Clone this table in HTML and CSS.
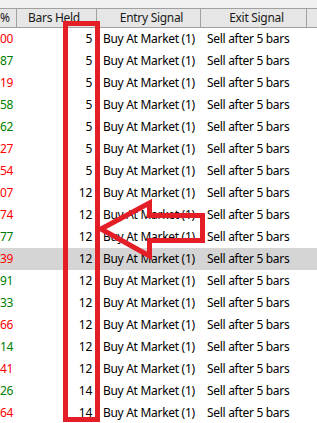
FILE: index.html
```html
<!DOCTYPE html>
<html>
<head>
<meta charset="utf-8">
<link rel="stylesheet" href="styles.css">
</head>
<body>
<div class="view">
  <div class="table">
    <div class="row head">
      <div class="cell c1">%</div>
      <div class="cell c2">Bars Held</div>
      <div class="cell c3">Entry Signal</div>
      <div class="cell c4">Exit Signal</div>
      <div class="cell c5"></div>
    </div>
    <div class="row"><div class="cell c1 neg">00</div><div class="cell c2">5</div><div class="cell c3">Buy At Market (1)</div><div class="cell c4">Sell after 5 bars</div><div class="cell c5"></div></div>
    <div class="row"><div class="cell c1 pos">87</div><div class="cell c2">5</div><div class="cell c3">Buy At Market (1)</div><div class="cell c4">Sell after 5 bars</div><div class="cell c5"></div></div>
    <div class="row"><div class="cell c1 neg">19</div><div class="cell c2">5</div><div class="cell c3">Buy At Market (1)</div><div class="cell c4">Sell after 5 bars</div><div class="cell c5"></div></div>
    <div class="row"><div class="cell c1 pos">58</div><div class="cell c2">5</div><div class="cell c3">Buy At Market (1)</div><div class="cell c4">Sell after 5 bars</div><div class="cell c5"></div></div>
    <div class="row"><div class="cell c1 pos">62</div><div class="cell c2">5</div><div class="cell c3">Buy At Market (1)</div><div class="cell c4">Sell after 5 bars</div><div class="cell c5"></div></div>
    <div class="row"><div class="cell c1 neg">27</div><div class="cell c2">5</div><div class="cell c3">Buy At Market (1)</div><div class="cell c4">Sell after 5 bars</div><div class="cell c5"></div></div>
    <div class="row"><div class="cell c1 neg">54</div><div class="cell c2">5</div><div class="cell c3">Buy At Market (1)</div><div class="cell c4">Sell after 5 bars</div><div class="cell c5"></div></div>
    <div class="row"><div class="cell c1 neg">07</div><div class="cell c2">12</div><div class="cell c3">Buy At Market (1)</div><div class="cell c4">Sell after 5 bars</div><div class="cell c5"></div></div>
    <div class="row"><div class="cell c1 neg">74</div><div class="cell c2">12</div><div class="cell c3">Buy At Market (1)</div><div class="cell c4">Sell after 5 bars</div><div class="cell c5"></div></div>
    <div class="row"><div class="cell c1 pos">77</div><div class="cell c2">12</div><div class="cell c3">Buy At Market (1)</div><div class="cell c4">Sell after 5 bars</div><div class="cell c5"></div></div>
    <div class="row selected"><div class="cell c1 neg">39</div><div class="cell c2">12</div><div class="cell c3">Buy At Market (1)</div><div class="cell c4">Sell after 5 bars</div><div class="cell c5"></div></div>
    <div class="row"><div class="cell c1 pos">91</div><div class="cell c2">12</div><div class="cell c3">Buy At Market (1)</div><div class="cell c4">Sell after 5 bars</div><div class="cell c5"></div></div>
    <div class="row"><div class="cell c1 pos">33</div><div class="cell c2">12</div><div class="cell c3">Buy At Market (1)</div><div class="cell c4">Sell after 5 bars</div><div class="cell c5"></div></div>
    <div class="row"><div class="cell c1 neg">66</div><div class="cell c2">12</div><div class="cell c3">Buy At Market (1)</div><div class="cell c4">Sell after 5 bars</div><div class="cell c5"></div></div>
    <div class="row"><div class="cell c1 pos">14</div><div class="cell c2">12</div><div class="cell c3">Buy At Market (1)</div><div class="cell c4">Sell after 5 bars</div><div class="cell c5"></div></div>
    <div class="row"><div class="cell c1 neg">41</div><div class="cell c2">12</div><div class="cell c3">Buy At Market (1)</div><div class="cell c4">Sell after 5 bars</div><div class="cell c5"></div></div>
    <div class="row"><div class="cell c1 pos">26</div><div class="cell c2">14</div><div class="cell c3">Buy At Market (1)</div><div class="cell c4">Sell after 5 bars</div><div class="cell c5"></div></div>
    <div class="row"><div class="cell c1 neg">64</div><div class="cell c2">14</div><div class="cell c3">Buy At Market (1)</div><div class="cell c4">Sell after 5 bars</div><div class="cell c5"></div></div>
  </div>
  <svg class="markup" width="317" height="423" viewBox="0 0 317 423">
    <rect x="65.5" y="23.5" width="32" height="396" fill="none" stroke="#e41e26" stroke-width="5"/>
    <polygon points="101,229 149.5,203 149.5,215.5 202.5,215.5 202.5,240.5 149.5,240.5 149.5,256" fill="none" stroke="#e41e26" stroke-width="5" stroke-linejoin="miter" stroke-miterlimit="10"/>
  </svg>
</div>
</body>
</html>
```

FILE: styles.css
```css
html, body {
  margin: 0;
  padding: 0;
}
body {
  background: #f0f0f0;
  font-family: "Noto Sans", "Open Sans", sans-serif;
  font-size: 12px;
  letter-spacing: -0.3px;
  color: #000;
  width: 317px;
  height: 423px;
  overflow: hidden;
}
.view {
  position: relative;
  width: 317px;
  height: 423px;
  overflow: hidden;
  padding-top: 8px;
  box-sizing: border-box;
}
.table {
  background: #fff;
}
.row {
  display: grid;
  grid-template-columns: 17px 80px 104px 106px 1fr;
  height: 22px;
  align-items: center;
}
.cell {
  box-sizing: border-box;
  white-space: nowrap;
  overflow: hidden;
  line-height: 22px;
  height: 22px;
}
.head {
  height: 20px;
  background: #e6e6e6;
  border-top: 1px solid #a0a0a0;
  border-bottom: 1px solid #a0a0a0;
  box-sizing: border-box;
}
.head .cell {
  height: 18px;
  line-height: 18px;
  text-align: center;
  border-right: 1px solid #a0a0a0;
  color: #1a1a1a;
}
.head .c1 {
  text-align: right;
  padding-right: 11px;
}
.head .c5 {
  border-right: none;
}
.c1 {
  text-align: right;
  padding-right: 5px;
}
.c2 {
  text-align: right;
  padding-right: 5px;
}
.c3, .c4 {
  padding-left: 6px;
}
.neg { color: #ff0000; }
.pos { color: #008000; }
.selected {
  background: #d5d5d5;
}
.markup {
  position: absolute;
  left: 0;
  top: 0;
  pointer-events: none;
}
```
